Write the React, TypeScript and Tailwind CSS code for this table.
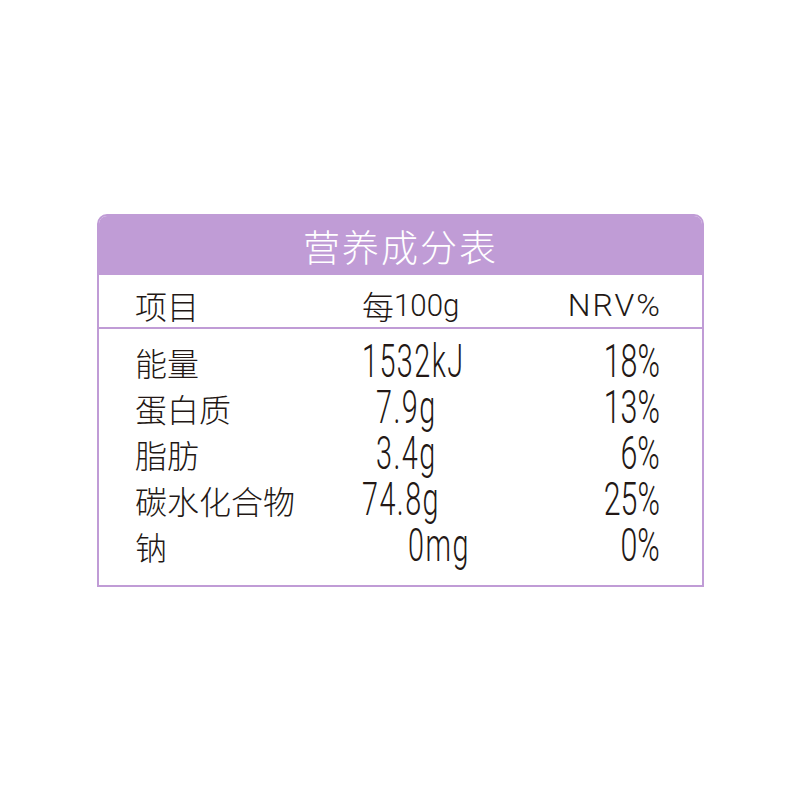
const rows = [
  { name: "能量", value: "1532kJ", pad: "pl-[0px]", nrv: "18%" },
  { name: "蛋白质", value: "7.9g", pad: "pl-[14px]", nrv: "13%" },
  { name: "脂肪", value: "3.4g", pad: "pl-[14px]", nrv: "6%" },
  { name: "碳水化合物", value: "74.8g", pad: "pl-[0px]", nrv: "25%" },
  { name: "钠", value: "0mg", pad: "pl-[46px]", nrv: "0%" },
]

const cjk = "font-['Noto_Sans_CJK_SC','Noto_Sans',sans-serif] font-light"
const num = "font-['Roboto','Liberation_Sans',sans-serif] font-light"

export default function App() {
  return (
    <div className="w-[800px] h-[800px] bg-white pt-[214px] pl-[97px]">
      <div className="w-[607px] rounded-t-[10px] border-2 border-[#c09cd6] text-[#231815] overflow-hidden">
        <div className="h-[59px] bg-[#c09cd6] flex items-center justify-center pt-[2px]">
          <span className={`${cjk} text-white text-[37px] tracking-[2px] leading-none`}>营养成分表</span>
        </div>

        <div className="h-[54px] border-b-2 border-[#c09cd6] flex items-center pl-[36px] pr-[40px] pt-[8px]">
          <div className={`${cjk} w-[227px] text-[32px] leading-none`}>项目</div>
          <div className="flex-1 flex items-center">
            <span className={`${cjk} text-[32px] leading-none`}>每</span>
            <span className={`inline-block ${num} text-[32px] leading-none scale-x-[0.92] origin-left`}>100g</span>
          </div>
          <span className={`inline-block ${num} text-[32px] leading-none tracking-[2px]`}>NRV%</span>
        </div>

        <div className="pt-[10px] pb-[16px] pl-[36px] pr-[42px]">
          {rows.map((row) => (
            <div key={row.name} className="h-[46px] flex items-center">
              <div className={`${cjk} w-[227px] text-[32px] leading-none`}>{row.name}</div>
              <div className={`flex-1 ${row.pad}`}>
                <span className={`inline-block ${num} text-[40px] leading-[36px] tracking-[2px] scale-x-[0.72] scale-y-[1.15] origin-left`}>{row.value}</span>
              </div>
              <span className={`inline-block ${num} text-[40px] leading-[36px] scale-x-[0.76] scale-y-[1.15] origin-right`}>{row.nrv}</span>
            </div>
          ))}
        </div>
      </div>
    </div>
  )
}
